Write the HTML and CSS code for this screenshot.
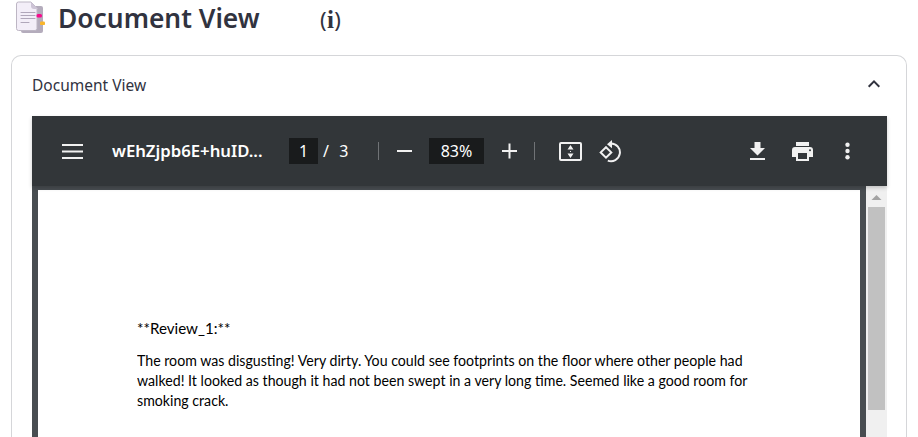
FILE: index.html
```html
<!DOCTYPE html>
<html lang="en">
<head>
<meta charset="utf-8">
<title>Document View</title>
<link rel="stylesheet" href="styles.css">
</head>
<body>
<header class="heading">
  <svg class="doc-icon" width="31" height="34" viewBox="0 0 31 34">
    <path d="M6 5h20q2 0 2 2v23q0 2-2 2H8q-2 0-2-2z" fill="#b4acbc"/>
    <path d="M3.500 1H16l6 6v20.500q0 2-2 2H3.500q-2 0-2-2V3q0-2 2-2z" fill="#f3eef8" stroke="#bdb6c4" stroke-width="1"/>
    <path d="M16 1v4q0 3 3 3h4z" fill="#cdc4d6"/>
    <path d="M6 11.500h14M6 14.500h14M6 17.500h14M6 21.500h8" stroke="#b0a7ba" stroke-width="1.1" stroke-linecap="round"/>
    <rect x="21.500" y="13" width="5.500" height="3.600" rx="1.5" fill="#f70a8d"/>
    <rect x="25" y="20.500" width="5" height="3.600" rx="1.2" fill="#f9b52b"/>
  </svg>
  <h1 class="title"><span class="fit">Document View</span></h1>
  <span class="info">(<b>i</b>)</span>
</header>
<main class="card">
  <div class="summary">
    <span class="label"><span class="fit">Document View</span></span>
    <svg width="14" height="10" viewBox="0 0 14 10"><path d="M1.7 7.8L7 2.4l5.3 5.4" fill="none" stroke="#31333f" stroke-width="2"/></svg>
  </div>
  <section class="viewer">
    <div class="toolbar">
      <svg class="menu" width="21" height="15" viewBox="0 0 21 15"><path d="M0 1h21M0 7.5h21M0 14h21" stroke="#f1f1f1" stroke-width="2"/></svg>
      <span class="filename"><span class="fit">wEhZjpb6E+huID...</span></span>
      <span class="field page-field">1</span>
      <span class="page-count">/&nbsp; 3</span>
      <i class="divider"></i>
      <svg class="minus" width="15" height="16" viewBox="0 0 15 16"><path d="M0 8h15" stroke="#f1f1f1" stroke-width="2"/></svg>
      <span class="field zoom-field">83%</span>
      <svg class="plus" width="15" height="16" viewBox="0 0 15 16"><path d="M0 8h15M7.5 .5v15" stroke="#f1f1f1" stroke-width="2"/></svg>
      <i class="divider second"></i>
      <svg class="fit-page" width="23" height="19" viewBox="0 0 23 19"><rect x="1" y="1" width="21" height="17" rx="1" fill="none" stroke="#f1f1f1" stroke-width="2"/><path d="M11.5 3l3 4.500h-6zM11.5 16l3-4.500h-6zM11 9h1v1h-1z" fill="#f1f1f1"/></svg>
      <svg class="rotate" width="23" height="23" viewBox="0 0 23 23"><path d="M7 7.2l5.3 5.2L7 17.6l-5.3-5.2z" fill="none" stroke="#f1f1f1" stroke-width="2"/><path d="M12 3.4a8.900 8.900 0 1 1-3.2 17.2" fill="none" stroke="#f1f1f1" stroke-width="2"/><path d="M8 4.2L13 0v8.2z" fill="#f1f1f1"/></svg>
      <svg class="download" width="15" height="18" viewBox="0 0 15 18"><path d="M4.5 0h6v6H15l-7.5 7.5L0 6h4.500zM0 16h15v2H0z" fill="#f1f1f1"/></svg>
      <svg class="print" width="21" height="19" viewBox="0 0 21 19"><path fill="#f1f1f1" fill-rule="evenodd" d="M4 0h13v4H4zM3 5h15q3 0 3 3v7h-4v4H4v-4H0V8q0-3 3-3zM6 11v6h9v-6z"/><circle cx="18" cy="8.300" r="1" fill="#323639"/></svg>
      <svg class="more" width="5" height="18" viewBox="0 0 5 18"><g fill="#f1f1f1"><circle cx="2.5" cy="2.700" r="2.200"/><circle cx="2.5" cy="9" r="2.200"/><circle cx="2.5" cy="15.300" r="2.200"/></g></svg>
    </div>
    <div class="content">
      <article class="page">
        <p><span class="fit marker">**Review_1:**</span></p>
        <p><span class="fit">The room was disgusting! Very dirty. You could see footprints on the floor where other people had</span><br><span class="fit">walked! It looked as though it had not been swept in a very long time. Seemed like a good room for</span><br><span class="fit">smoking crack.</span></p>
      </article>
      <div class="scrollbar">
        <svg width="21" height="21" viewBox="0 0 21 21"><path d="M10.500 9l5 5h-10z" fill="#a3a3a3"/></svg>
        <div class="thumb"></div>
      </div>
    </div>
  </section>
</main>
</body>
</html>
```
FILE: styles.css
```css
* { box-sizing: border-box; }
body { margin: 0; width: 918px; height: 437px; overflow: hidden; background: #fff; color: #31333f; font-family: "Noto Sans", sans-serif; }
svg { display: block; flex: none; }
.fit { display: inline-block; white-space: nowrap; transform-origin: 0 50%; }
.heading { display: flex; height: 55px; padding-left: 15px; }
.doc-icon { margin-top: 1px; }
.title { margin: 0 0 0 12px; width: 262px; font-size: 26.500px; line-height: 37px; font-weight: 600; }
.title .fit { transform: scaleX(.995); }
.info { font-size: 22px; line-height: 39px; letter-spacing: .3px; }
.info b { font-family: "Liberation Serif", serif; font-size: 25px; }
.card { width: 896px; height: 382px; overflow: hidden; margin-left: 11px; border: 1px solid #d5d6d9; border-bottom: 0; border-radius: 10px 10px 0 0; padding: 0 19px 0 20px; }
.summary { display: flex; justify-content: space-between; align-items: center; height: 60px; padding: 0 6px 2px 0; }
.summary svg { margin-top: -2px; }
.label { font-size: 15.500px; }
.viewer { width: 855px; }
.toolbar { display: flex; align-items: center; height: 70px; padding-left: 30px; background: #323639; color: #fff; font-size: 16px; position: relative; box-shadow: 0 2px 4px rgba(0,0,0,.2); }
.filename { width: 177px; margin-left: 29px; font-weight: 600; }
.filename .fit { transform: scaleX(1.045); }
.field { height: 26px; line-height: 26px; background: #191b1c; text-align: center; }
.page-field { width: 29px; }
.page-count { width: 36px; margin-left: 5px; white-space: nowrap; word-spacing: 1px; }
.divider { width: 1px; height: 18px; background: #707376; margin-left: 19px; }
.divider.second { margin-left: 17px; }
.minus { margin-left: 18px; }
.zoom-field { width: 55px; margin-left: 17px; }
.plus { margin-left: 18px; }
.fit-page { margin-left: 24px; }
.rotate { margin-left: 17px; }
.download { margin-left: 128px; }
.print { margin-left: 27px; }
.more { margin-left: 32px; }
.content { display: flex; height: 251px; background: #484d51; padding-left: 6px; }
.page { width: 822px; margin-top: 4px; padding: 129px 0 0 99px; background: #fff; color: #000; font: 14.500px/20px Lato, sans-serif; }
.page p { margin: 0 0 12px; }
.page .fit { transform: scaleX(.977); }
.page .marker { transform: scaleX(1.045); }
.scrollbar { width: 21px; margin-left: 6px; background: #f0f0f0; }
.thumb { width: 17px; height: 203px; margin-left: 2px; background: #c1c1c1; }
```
